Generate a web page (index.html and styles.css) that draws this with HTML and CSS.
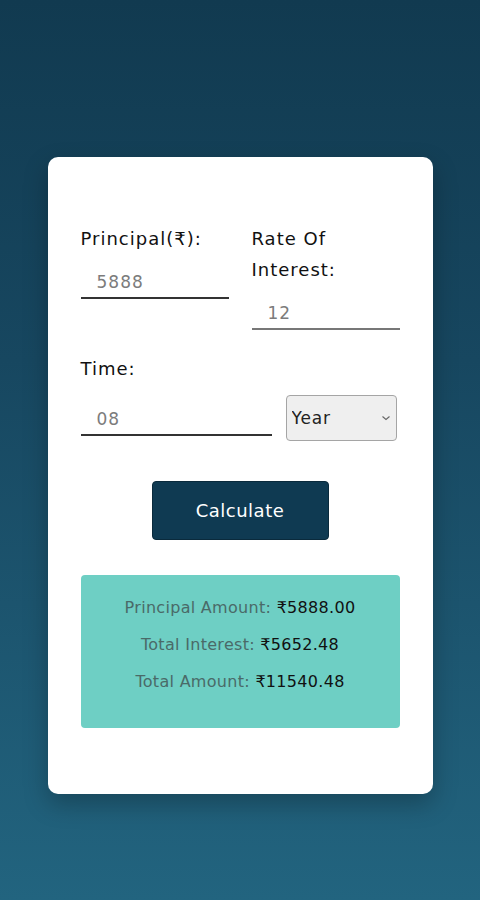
FILE: index.html
```html
<!DOCTYPE html>
<html lang="en">
<head>
  <meta charset="UTF-8" />
  <meta name="viewport" content="width=device-width, initial-scale=1.0" />
  <title>Simple Interest Calculator</title>
  <link rel="stylesheet" href="styles.css">
</head>
<body>
  <div class="card">
    <div class="row">
      <div class="field">
        <label for="principal">Principal(₹):</label>
        <input type="text" id="principal" value="5888" />
      </div>
      <div class="field">
        <label for="rate">Rate Of Interest:</label>
        <input type="text" id="rate" class="light" value="12" />
      </div>
    </div>

    <div class="field time">
      <label for="time">Time:</label>
      <div class="time-row">
        <input type="text" id="time" value="08" />
        <div class="select-wrap">
          <select id="unit">
            <option>Year</option>
            <option>Month</option>
          </select>
          <svg class="chev" width="10" height="6" viewBox="0 0 10 6"><path d="M1.5 1.5l3.5 3 3.5-3" fill="none" stroke="#666" stroke-width="1.1"/></svg>
        </div>
      </div>
    </div>

    <button class="calc" type="button">Calculate</button>

    <div class="result">
      <p>Principal Amount: <b>₹5888.00</b></p>
      <p>Total Interest: <b>₹5652.48</b></p>
      <p>Total Amount: <b>₹11540.48</b></p>
    </div>
  </div>
</body>
</html>
```
FILE: styles.css
```css
html {
  height: 100%;
}
body {
  margin: 0;
  min-height: 100%;
  font-family: "DejaVu Sans", "Noto Sans", sans-serif;
  background: linear-gradient(180deg, #113a50 0%, #174760 40%, #22647f 100%);
  padding: 157px 0 0;
  box-sizing: border-box;
}
.card {
  width: 385px;
  margin: 0 auto;
  box-sizing: border-box;
  background: #fff;
  border-radius: 10px;
  padding: 66px 33px 66px;
  box-shadow: 0 10px 24px rgba(0, 0, 0, 0.25);
}
.row {
  display: grid;
  grid-template-columns: 148px 148px;
  column-gap: 23px;
}
.field {
  display: flex;
  flex-direction: column;
}
label {
  font-size: 18px;
  letter-spacing: 1px;
  line-height: 31px;
  color: #111;
}
input {
  font-family: inherit;
  font-size: 17px;
  letter-spacing: 1px;
  color: #7c7c7c;
  border: none;
  border-bottom: 2px solid #333;
  outline: none;
  height: 36px;
  box-sizing: border-box;
  padding: 3px 0 0 16px;
  margin-top: 9px;
  background: transparent;
}
input.light {
  border-bottom-color: #777;
}
.time {
  margin-top: 23px;
}
.time-row {
  display: flex;
  align-items: center;
  gap: 14px;
  margin-top: 11px;
}
.time-row input {
  width: 191px;
  margin-top: 0;
}
.select-wrap {
  position: relative;
}
select {
  appearance: none;
  -webkit-appearance: none;
  display: block;
  width: 111px;
  height: 46px;
  font-family: inherit;
  font-size: 17px;
  letter-spacing: 0.8px;
  color: #222;
  background: #efefef;
  border: 1px solid #a5a5a5;
  border-radius: 4px;
  padding: 0 5px;
}
.chev {
  position: absolute;
  right: 6px;
  top: 20px;
  pointer-events: none;
}
.calc {
  display: block;
  margin: 40px auto 0;
  width: 177px;
  height: 59px;
  background: #0f3a52;
  color: #fff;
  border: 1px solid #0a2a3c;
  border-radius: 4px;
  font-family: inherit;
  font-size: 18px;
  letter-spacing: 0.5px;
}
.result {
  margin-top: 35px;
  background: #6ecfc4;
  border-radius: 4px;
  padding: 21px 0 34px;
  display: flex;
  flex-direction: column;
  gap: 13px;
  text-align: center;
}
.result p {
  margin: 0;
  font-size: 16px;
  letter-spacing: 0.3px;
  line-height: 24px;
  color: #4a6a68;
}
.result b {
  font-weight: normal;
  color: #111;
}
```
